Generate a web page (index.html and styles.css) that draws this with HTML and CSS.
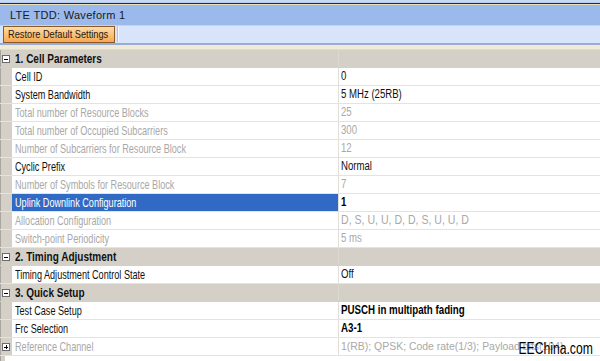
FILE: index.html
```html
<!DOCTYPE html>
<html>
<head>
<meta charset="utf-8">
<link rel="stylesheet" href="styles.css">
</head>
<body>
<div class="window">
  <div class="topline"></div>
  <div class="titlebar"><span class="t">LTE TDD: Waveform 1</span></div>
  <div class="toolbar">
    <button class="btn"><span class="t">Restore Default Settings</span></button>
    <span class="tsep"></span>
  </div>
  <div class="cream"></div>
  <div class="grid">
    <div class="row head"><span class="gut"><svg class="ico" viewBox="0 0 8 8"><rect x="0.5" y="0.5" width="7" height="7" fill="#fff" stroke="#6b6b6b"/><path d="M2 4.5h4" stroke="#000"/></svg></span><span class="name"><span class="t">1. Cell Parameters</span></span><span class="val"></span></div>
    <div class="row"><span class="gut"></span><span class="name"><span class="t">Cell ID</span></span><span class="val"><span class="t">0</span></span></div>
    <div class="row"><span class="gut"></span><span class="name"><span class="t">System Bandwidth</span></span><span class="val"><span class="t">5 MHz (25RB)</span></span></div>
    <div class="row dis"><span class="gut"></span><span class="name"><span class="t">Total number of Resource Blocks</span></span><span class="val"><span class="t">25</span></span></div>
    <div class="row dis"><span class="gut"></span><span class="name"><span class="t">Total number of Occupied Subcarriers</span></span><span class="val"><span class="t">300</span></span></div>
    <div class="row dis"><span class="gut"></span><span class="name"><span class="t">Number of Subcarriers for Resource Block</span></span><span class="val"><span class="t">12</span></span></div>
    <div class="row"><span class="gut"></span><span class="name"><span class="t">Cyclic Prefix</span></span><span class="val"><span class="t">Normal</span></span></div>
    <div class="row dis"><span class="gut"></span><span class="name"><span class="t">Number of Symbols for Resource Block</span></span><span class="val"><span class="t">7</span></span></div>
    <div class="row sel"><span class="gut"></span><span class="name"><span class="t">Uplink Downlink Configuration</span></span><span class="val bold"><span class="t">1</span></span></div>
    <div class="row dis"><span class="gut"></span><span class="name"><span class="t">Allocation Configuration</span></span><span class="val spaced"><span class="t">D, S, U, U, D, D, S, U, U, D</span></span></div>
    <div class="row dis"><span class="gut"></span><span class="name"><span class="t">Switch-point Periodicity</span></span><span class="val"><span class="t">5 ms</span></span></div>
    <div class="row head"><span class="gut"><svg class="ico" viewBox="0 0 8 8"><rect x="0.5" y="0.5" width="7" height="7" fill="#fff" stroke="#6b6b6b"/><path d="M2 4.5h4" stroke="#000"/></svg></span><span class="name"><span class="t">2. Timing Adjustment</span></span><span class="val"></span></div>
    <div class="row"><span class="gut"></span><span class="name"><span class="t">Timing Adjustment Control State</span></span><span class="val"><span class="t">Off</span></span></div>
    <div class="row head"><span class="gut"><svg class="ico" viewBox="0 0 8 8"><rect x="0.5" y="0.5" width="7" height="7" fill="#fff" stroke="#6b6b6b"/><path d="M2 4.5h4" stroke="#000"/></svg></span><span class="name"><span class="t">3. Quick Setup</span></span><span class="val"></span></div>
    <div class="row"><span class="gut"></span><span class="name"><span class="t">Test Case Setup</span></span><span class="val bold"><span class="t">PUSCH in multipath fading</span></span></div>
    <div class="row"><span class="gut"></span><span class="name"><span class="t">Frc Selection</span></span><span class="val bold"><span class="t">A3-1</span></span></div>
    <div class="row dis"><span class="gut"><svg class="ico" viewBox="0 0 8 8"><rect x="0.5" y="0.5" width="7" height="7" fill="#fff" stroke="#6b6b6b"/><path d="M2 4.5h4M4.5 2v4" stroke="#000"/></svg></span><span class="name"><span class="t">Reference Channel</span></span><span class="val wide"><span class="t">1(RB); QPSK; Code rate(1/3); Payload bits(104)</span></span><span class="mark">EEChina.com</span></div>
    <div class="filler"><span class="fgut"></span></div>
  </div>
</div>
</body>
</html>
```

FILE: styles.css
```css
html, body {
  margin: 0;
  padding: 0;
  background: #fff;
}
.window {
  width: 600px;
  height: 361px;
  overflow: hidden;
  display: flex;
  flex-direction: column;
  font-family: "Liberation Sans", Arial, sans-serif;
}
.t {
  display: inline-block;
  white-space: nowrap;
  transform: scaleX(var(--sx, 1));
  transform-origin: 0 50%;
}
.topline {
  height: 5px;
  box-sizing: border-box;
  background: #b9cdf0;
  border-top: 2px solid #c9d8f4;
  border-bottom: 1px solid #e9e2b8;
  box-shadow: inset 0 -1px 0 #1e2c46;
}
.titlebar {
  height: 21px;
  box-sizing: border-box;
  background: #9cb9eb;
  border-bottom: 1px solid #c3d4f3;
  padding-left: 10px;
  font-size: 11px;
  letter-spacing: 0.3px;
  line-height: 20px;
  color: #1a1a1a;
  --sx: 1;
}
.toolbar {
  height: 19px;
  box-sizing: border-box;
  background: #d7e4f9;
  border-bottom: 2px solid #9babd9;
  display: flex;
  align-items: flex-start;
  padding-left: 3px;
}
.btn {
  height: 17px;
  width: 112px;
  margin: 0;
  padding: 0 0 0 4px;
  box-sizing: border-box;
  border: 1px solid #8a5a28;
  background: linear-gradient(#ffdca8, #fbbd70 60%, #f6a850);
  font-family: "Liberation Sans", Arial, sans-serif;
  font-size: 11px;
  text-align: left;
  color: #1a1a1a;
  line-height: 15px;
  overflow: hidden;
  --sx: 0.84;
}
.tsep {
  width: 1px;
  height: 16px;
  margin-left: 2px;
  background: #f4f8ff;
  border-left: 1px solid #aebde3;
}
.cream {
  height: 4px;
  background: #efebd4;
  border-bottom: 1px solid #e0dccb;
}
.grid {
  flex: 1;
  display: flex;
  flex-direction: column;
  background: #fff;
}
.row {
  height: 18px;
  box-sizing: border-box;
  display: grid;
  grid-template-columns: 12px 327px 1fr;
  border-bottom: 1px solid #e6e3dc;
  font-size: 13px;
  line-height: 17px;
  color: #111;
  position: relative;
}
.gut {
  background: #d4d0c8;
  border-left: 1px solid #a8a59e;
  display: flex;
  align-items: center;
  padding-left: 1px;
}
.ico {
  width: 8px;
  height: 8px;
}
.name {
  padding-left: 3px;
  border-right: 1px solid #e2dfd8;
  white-space: nowrap;
  overflow: hidden;
  --sx: 0.7;
}
.val {
  padding-left: 2px;
  white-space: nowrap;
  overflow: hidden;
  font-size: 12px;
  --sx: 0.8;
}
.head {
  background: #d4d0c8;
  border-bottom: 1px solid #d4d0c8;
}
.head .name {
  font-weight: bold;
  border-right: 1px solid #dcd9d2;
  --sx: 0.77;
}
.dis {
  color: #a8a8a8;
}
.sel .name {
  background: #316ac5;
  color: #fff;
}
.bold {
  font-weight: bold;
  font-size: 12px;
  color: #000;
  --sx: 0.81;
}
.spaced {
  --sx: 0.88;
}
.wide {
  font-size: 11px;
  --sx: 0.95;
}
.mark {
  position: absolute;
  right: 7px;
  top: 2px;
  font-size: 16px;
  line-height: 17px;
  color: #000;
  transform: scaleX(0.76);
  transform-origin: 100% 50%;
}
.filler {
  flex: 1;
  display: flex;
}
.fgut {
  width: 4px;
  background: #d4d0c8;
  border-left: 1px solid #a8a59e;
}
```
